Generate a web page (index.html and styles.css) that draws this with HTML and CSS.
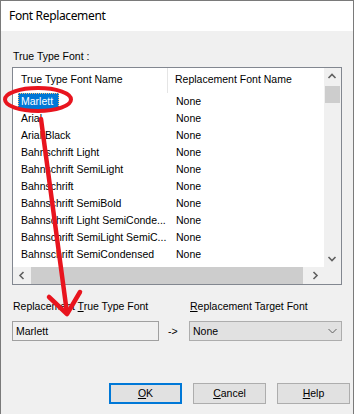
FILE: index.html
```html
<!DOCTYPE html>
<html>
<head>
<meta charset="utf-8">
<link rel="stylesheet" href="styles.css">
</head>
<body>
<div class="window">
  <div class="titlebar">Font Replacement</div>
  <div class="content">
    <div class="label">True Type Font :</div>
    <div class="listbox">
      <div class="list-main">
        <div class="list-view">
          <div class="lv-header">
            <div class="c1">True Type Font Name</div>
            <div class="c2">Replacement Font Name</div>
          </div>
          <div class="lv-row"><div class="c1"><span class="sel">Marlett</span></div><div class="c2">None</div></div>
          <div class="lv-row"><div class="c1"><span>Arial</span></div><div class="c2">None</div></div>
          <div class="lv-row"><div class="c1"><span>Arial Black</span></div><div class="c2">None</div></div>
          <div class="lv-row"><div class="c1"><span>Bahnschrift Light</span></div><div class="c2">None</div></div>
          <div class="lv-row"><div class="c1"><span>Bahnschrift SemiLight</span></div><div class="c2">None</div></div>
          <div class="lv-row"><div class="c1"><span>Bahnschrift</span></div><div class="c2">None</div></div>
          <div class="lv-row"><div class="c1"><span>Bahnschrift SemiBold</span></div><div class="c2">None</div></div>
          <div class="lv-row"><div class="c1"><span>Bahnschrift Light SemiConde...</span></div><div class="c2">None</div></div>
          <div class="lv-row"><div class="c1"><span>Bahnschrift SemiLight SemiC...</span></div><div class="c2">None</div></div>
          <div class="lv-row"><div class="c1"><span>Bahnschrift SemiCondensed</span></div><div class="c2">None</div></div>
        </div>
        <div class="vscroll">
          <div class="sb-btn"><svg width="17" height="17" viewBox="0 0 17 17"><polyline points="4.5,10 8,6.5 11.5,10" fill="none" stroke="#606060" stroke-width="1.6"/></svg></div>
          <div class="vtrack"><div class="vthumb"></div></div>
          <div class="sb-btn"><svg width="17" height="17" viewBox="0 0 17 17"><polyline points="4.5,7 8,10.5 11.5,7" fill="none" stroke="#606060" stroke-width="1.6"/></svg></div>
        </div>
      </div>
      <div class="hscroll-row">
        <div class="hscroll">
          <div class="sb-btn"><svg width="17" height="17" viewBox="0 0 17 17"><polyline points="10.5,5 7,8.5 10.5,12" fill="none" stroke="#606060" stroke-width="1.6"/></svg></div>
          <div class="htrack"><div class="hthumb"></div></div>
          <div class="sb-btn"><svg width="17" height="17" viewBox="0 0 17 17"><polyline points="6.5,5 10,8.5 6.5,12" fill="none" stroke="#606060" stroke-width="1.6"/></svg></div>
        </div>
        <div class="corner"></div>
      </div>
    </div>
    <div class="repl">
      <div class="label sub">Replacement <u>T</u>rue Type Font</div>
      <div class="spacer"></div>
      <div class="label sub"><u>R</u>eplacement Target Font</div>
      <div class="textbox">Marlett</div>
      <div class="arrow">-&gt;</div>
      <div class="combo"><span>None</span><svg width="9" height="6" viewBox="0 0 9 6"><polyline points="0.5,1 4.5,5 8.5,1" fill="none" stroke="#606060" stroke-width="1"/></svg></div>
    </div>
    <div class="buttons">
      <div class="btn default"><u>O</u>K</div>
      <div class="btn"><u>C</u>ancel</div>
      <div class="btn"><u>H</u>elp</div>
    </div>
  </div>
  <svg class="annot" width="355" height="414" viewBox="0 0 355 414">
    <ellipse cx="38" cy="99.5" rx="33" ry="11.5" fill="none" stroke="#e8141e" stroke-width="4"/>
    <line x1="41" y1="119" x2="67" y2="313" stroke="#e8141e" stroke-width="4.5" stroke-linecap="round"/>
    <polyline points="49,297 67,314 80,292" fill="none" stroke="#e8141e" stroke-width="4.5" stroke-linecap="round" stroke-linejoin="round"/>
  </svg>
</div>
</body>
</html>
```
FILE: styles.css
```css
html, body {
  margin: 0;
  padding: 0;
  background: #ffffff;
}
body {
  font-family: "Liberation Sans", Arial, sans-serif;
  font-size: 10.5px;
  color: #000;
}
.window {
  position: relative;
  width: 352px;
  height: 414px;
  border: 1px solid #7a7a7a;
  border-bottom: none;
  background: #f0f0f0;
  display: flex;
  flex-direction: column;
}
.titlebar {
  height: 30px;
  line-height: 30px;
  background: #ffffff;
  padding-left: 8px;
  font-family: "Noto Sans", "Open Sans", sans-serif;
  font-size: 12px;
  letter-spacing: -0.35px;
  color: #000;
}
.content {
  padding: 19px 11px 0 11px;
  display: flex;
  flex-direction: column;
}
.label {
  line-height: 13px;
  height: 13px;
  padding-left: 1px;
  white-space: nowrap;
}
.listbox {
  margin-top: 4px;
  height: 218px;
  box-sizing: border-box;
  border: 1px solid #828790;
  background: #fff;
  display: flex;
  flex-direction: column;
}
.list-main {
  flex: 1;
  display: flex;
  min-height: 0;
}
.list-view {
  flex: 1;
  overflow: hidden;
  background: #fff;
}
.lv-header, .lv-row {
  display: flex;
  white-space: nowrap;
}
.lv-header {
  height: 25px;
  box-sizing: border-box;
  padding-top: 3px;
  line-height: 17px;
}
.lv-header .c1 {
  width: 155px;
  box-sizing: border-box;
  padding-left: 8px;
  border-right: 1px solid #e5e5e5;
  margin-top: -3px;
  padding-top: 3px;
}
.lv-header .c2 {
  padding-left: 7px;
}
.lv-row {
  height: 17px;
  line-height: 17px;
}
.lv-row .c1 {
  width: 155px;
  box-sizing: border-box;
  padding-left: 5px;
  overflow: hidden;
}
.lv-row .c1 span {
  display: inline-block;
  padding: 0 6px 0 3px;
}
.lv-row .c1 span.sel {
  background: #0078d7;
  color: #fff;
  outline: 1px dotted #f5c27a;
  outline-offset: -1px;
}
.lv-row .c2 {
  padding-left: 8px;
}
.vscroll {
  width: 17px;
  background: #f0f0f0;
  display: flex;
  flex-direction: column;
}
.sb-btn {
  width: 17px;
  height: 17px;
  flex: none;
}
.sb-btn svg {
  display: block;
}
.vtrack {
  flex: 1;
  padding-top: 1px;
}
.vthumb {
  height: 17px;
  margin: 0 1px;
  background: #cdcdcd;
}
.hscroll-row {
  height: 17px;
  display: flex;
}
.hscroll {
  flex: 1;
  display: flex;
  background: #f0f0f0;
}
.htrack {
  flex: 1;
  padding-left: 1px;
}
.hthumb {
  width: 272px;
  height: 17px;
  background: #cdcdcd;
}
.corner {
  width: 17px;
  background: #f0f0f0;
}
.repl {
  margin-top: 15px;
  display: grid;
  grid-template-columns: 147px 30px 153px;
  row-gap: 8px;
}
.textbox {
  height: 20px;
  box-sizing: border-box;
  border: 1px solid #a0a0a0;
  background: #f0f0f0;
  padding-left: 3px;
  line-height: 18px;
}
.arrow {
  align-self: center;
  padding-left: 9px;
  line-height: 13px;
}
.combo {
  height: 20px;
  box-sizing: border-box;
  border: 1px solid #adadad;
  background: #e1e1e1;
  display: flex;
  align-items: center;
  justify-content: space-between;
  padding: 0 4px 0 3px;
  line-height: 18px;
}
.combo svg {
  display: block;
}
.buttons {
  margin-top: 42px;
  margin-right: -8px;
  display: flex;
  justify-content: flex-end;
  gap: 11px;
}
.btn {
  width: 73px;
  height: 21px;
  box-sizing: border-box;
  border: 1px solid #adadad;
  background: #e1e1e1;
  text-align: center;
  line-height: 19px;
}
.btn.default {
  border: 2px solid #0078d7;
  line-height: 17px;
}
.annot {
  position: absolute;
  left: -1px;
  top: -1px;
  pointer-events: none;
}
```
